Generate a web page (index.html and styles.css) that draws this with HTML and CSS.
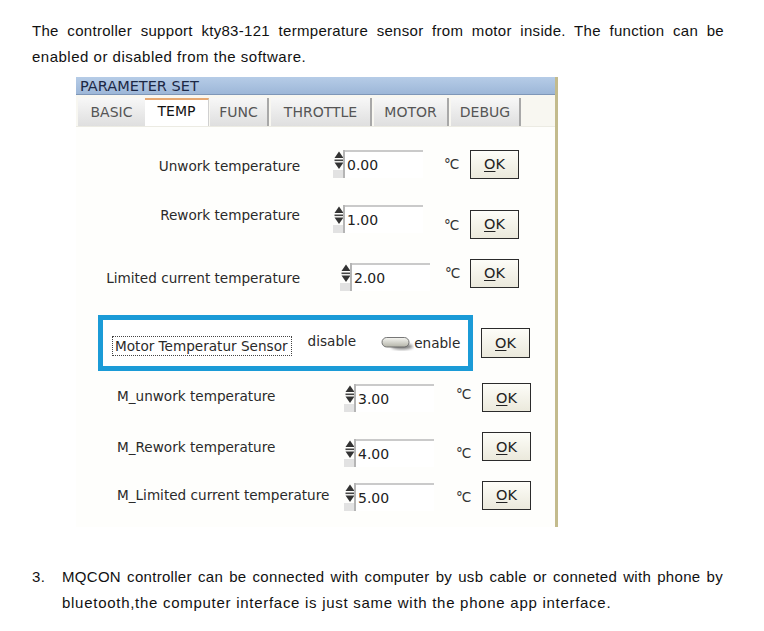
FILE: index.html
```html
<!DOCTYPE html>
<html>
<head>
<meta charset="utf-8">
<title>Parameter set</title>
<link rel="stylesheet" href="styles.css">
</head>
<body>
<div class="intro">
  <div class="jline">The controller support kty83-121 termperature sensor from motor inside. The function can be</div>
  <div class="last-a">enabled or disabled from the software.</div>
</div>

<div class="win">
  <div class="title">PARAMETER SET</div>
  <div class="tabs">
    <div class="tab w-basic">BASIC</div>
    <div class="tab sel w-temp">TEMP</div>
    <div class="tab w-func">FUNC</div>
    <div class="tab w-thr">THROTTLE</div>
    <div class="tab w-mot">MOTOR</div>
    <div class="tab w-dbg">DEBUG</div>
  </div>

  <div class="row r1 ga">
    <div class="lbl s-d2">Unwork temperature</div>
    <div class="spinbox">
      <svg class="spin" width="12" height="28" viewBox="0 0 12 28"><path d="M6 1.5L10.5 8H1.5Z" fill="#333"/><rect x="1.5" y="9.5" width="9" height="1.6" fill="#444"/><path d="M1.5 12.5H10.5L6 19Z" fill="#333"/><rect x="0" y="20" width="11" height="8" fill="#e2e2e2"/><rect x="10" y="0" width="2" height="28" fill="#b5b5b5"/></svg>
      <div class="field">0.00</div>
    </div>
    <div class="unit">°C</div>
    <div class="ok"><span><u>O</u>K</span></div>
  </div>

  <div class="row r2 ga">
    <div class="lbl s-u9">Rework temperature</div>
    <div class="spinbox s-u5">
      <svg class="spin" width="12" height="28" viewBox="0 0 12 28"><path d="M6 1.5L10.5 8H1.5Z" fill="#333"/><rect x="1.5" y="9.5" width="9" height="1.6" fill="#444"/><path d="M1.5 12.5H10.5L6 19Z" fill="#333"/><rect x="0" y="20" width="11" height="8" fill="#e2e2e2"/><rect x="10" y="0" width="2" height="28" fill="#b5b5b5"/></svg>
      <div class="field">1.00</div>
    </div>
    <div class="unit s-d1">°C</div>
    <div class="ok"><span><u>O</u>K</span></div>
  </div>

  <div class="row r3 gb">
    <div class="lbl s-d5">Limited current temperature</div>
    <div class="spinbox s-d4">
      <svg class="spin" width="12" height="28" viewBox="0 0 12 28"><path d="M6 1.5L10.5 8H1.5Z" fill="#333"/><rect x="1.5" y="9.5" width="9" height="1.6" fill="#444"/><path d="M1.5 12.5H10.5L6 19Z" fill="#333"/><rect x="0" y="20" width="11" height="8" fill="#e2e2e2"/><rect x="10" y="0" width="2" height="28" fill="#b5b5b5"/></svg>
      <div class="field">2.00</div>
    </div>
    <div class="unit">°C</div>
    <div class="ok"><span><u>O</u>K</span></div>
  </div>

  <div class="row rb">
    <div class="bluebox">
      <div class="sensor">Motor Temperatur Sensor</div>
      <div class="opt-dis s-u2">disable</div>
      <svg class="toggle" width="34" height="16" viewBox="0 0 34 16">
        <defs>
          <linearGradient id="tg" x1="0" y1="0" x2="0" y2="1"><stop offset="0" stop-color="#f7f7f3"/><stop offset="1" stop-color="#b3b3a8"/></linearGradient>
          <filter id="bl" x="-50%" y="-50%" width="200%" height="200%"><feGaussianBlur stdDeviation="1.4"/></filter>
        </defs>
        <ellipse cx="22" cy="11.5" rx="11" ry="3" fill="#808080" filter="url(#bl)"/>
        <rect x="2" y="2.5" width="27" height="9.5" rx="4.7" fill="url(#tg)" stroke="#666" stroke-width="0.9"/>
      </svg>
      <div class="opt-en">enable</div>
    </div>
    <div class="ok ok-b"><span><u>O</u>K</span></div>
  </div>

  <div class="row r4 gc">
    <div class="lbl s-u2">M_unwork temperature</div>
    <div class="spinbox">
      <svg class="spin" width="12" height="28" viewBox="0 0 12 28"><path d="M6 1.5L10.5 8H1.5Z" fill="#333"/><rect x="1.5" y="9.5" width="9" height="1.6" fill="#444"/><path d="M1.5 12.5H10.5L6 19Z" fill="#333"/><rect x="0" y="20" width="11" height="8" fill="#e2e2e2"/><rect x="10" y="0" width="2" height="28" fill="#b5b5b5"/></svg>
      <div class="field">3.00</div>
    </div>
    <div class="unit s-u4">°C</div>
    <div class="ok"><span><u>O</u>K</span></div>
  </div>

  <div class="row r5 gc">
    <div class="lbl">M_Rework temperature</div>
    <div class="spinbox s-d6">
      <svg class="spin" width="12" height="28" viewBox="0 0 12 28"><path d="M6 1.5L10.5 8H1.5Z" fill="#333"/><rect x="1.5" y="9.5" width="9" height="1.6" fill="#444"/><path d="M1.5 12.5H10.5L6 19Z" fill="#333"/><rect x="0" y="20" width="11" height="8" fill="#e2e2e2"/><rect x="10" y="0" width="2" height="28" fill="#b5b5b5"/></svg>
      <div class="field">4.00</div>
    </div>
    <div class="unit s-d6">°C</div>
    <div class="ok"><span><u>O</u>K</span></div>
  </div>

  <div class="row r6 gc">
    <div class="lbl">M_Limited current temperature</div>
    <div class="spinbox s-d2">
      <svg class="spin" width="12" height="28" viewBox="0 0 12 28"><path d="M6 1.5L10.5 8H1.5Z" fill="#333"/><rect x="1.5" y="9.5" width="9" height="1.6" fill="#444"/><path d="M1.5 12.5H10.5L6 19Z" fill="#333"/><rect x="0" y="20" width="11" height="8" fill="#e2e2e2"/><rect x="10" y="0" width="2" height="28" fill="#b5b5b5"/></svg>
      <div class="field">5.00</div>
    </div>
    <div class="unit s-d2">°C</div>
    <div class="ok"><span><u>O</u>K</span></div>
  </div>
</div>

<div class="note">
  <div class="num">3.</div>
  <div class="note-body">
    <div class="jline">MQCON controller can be connected with computer by usb cable or conneted with phone by</div>
    <div class="last-b">bluetooth,the computer interface is just same with the phone app interface.</div>
  </div>
</div>
</body>
</html>
```

FILE: styles.css
```css
body {
  margin: 0;
  background: #ffffff;
  color: #111111;
  font-family: "Liberation Sans", Arial, sans-serif;
}

.intro {
  padding: 18px 0 0 32px;
  width: 692px;
  font-size: 15px;
  line-height: 26px;
  letter-spacing: 0.3px;
}

.jline {
  text-align: justify;
  text-align-last: justify;
}

.last-a { letter-spacing: 0.5px; }
.last-b { letter-spacing: 0.72px; }

/* dialog window */
.win {
  margin: 7px 0 0 76px;
  width: 479px;
  border-right: 3px solid #c3bb8d;
  background: #fefefc;
  font-family: "DejaVu Sans", Verdana, sans-serif;
  font-size: 13.6px;
  color: #2a2a2a;
  padding-bottom: 17px;
}

.title {
  height: 17px;
  line-height: 18px;
  border-bottom: 1px solid #7f97b8;
  background: linear-gradient(#b6cce7, #9db7d8);
  padding-left: 4px;
  color: #1c2845;
  font-size: 14.5px;
}

.tabs {
  display: flex;
  height: 32px;
  box-sizing: border-box;
  padding: 3px 0 0 2px;
  background: #f8f7f1;
  border-bottom: 1px solid #ecebe3;
}

.tab {
  height: 28px;
  line-height: 28px;
  box-sizing: border-box;
  text-align: center;
  background: linear-gradient(#f7f7f7, #dfdfdf);
  border-right: 2px solid #a8a8a8;
  color: #555;
  font-size: 14px;
}

.tab.sel {
  background: #ffffff;
  border-top: 2px solid #e6a872;
  border-right: 1px solid #d0d0d0;
  line-height: 22px;
  color: #111;
}

.w-basic { width: 67px; border-right: 0; }
.w-temp { width: 64px; }
.w-func { width: 59px; margin-left: 1px; margin-right: 2px; }
.w-thr { width: 101px; margin-right: 2px; }
.w-mot { width: 75px; margin-right: 2px; }
.w-dbg { width: 70px; }

/* rows */
.row {
  display: flex;
  align-items: center;
  height: 30px;
}

.r1 { margin-top: 22px; }
.r2 { margin-top: 30px; }
.r3 { margin-top: 19px; }
.rb { margin-top: 27px; height: 56px; }
.r4 { margin-top: 12px; height: 29px; }
.r5 { margin-top: 20px; height: 29px; }
.r6 { margin-top: 19px; height: 30px; }

.lbl { white-space: nowrap; }

.ga .lbl, .gb .lbl { width: 224px; text-align: right; }
.ga .spinbox { margin-left: 33px; }
.ga .unit { margin-left: 21px; width: 26px; }

.gb .spinbox { margin-left: 40px; }
.gb .unit { margin-left: 15px; width: 25px; }

.gc { padding-left: 41px; }
.gc .lbl { width: 227px; }
.gc .unit { margin-left: 22px; width: 26px; }

.spinbox {
  display: flex;
  height: 28px;
}

.spin { display: block; }

.field {
  width: 78px;
  height: 28px;
  box-sizing: border-box;
  border-top: 2px solid #cacaca;
  background: #ffffff;
  padding-left: 2px;
  line-height: 27px;
  color: #222;
  font-size: 14px;
}

.unit {
  font-size: 13.5px;
  letter-spacing: -1px;
  color: #333;
}

.ok {
  width: 49px;
  height: 29px;
  box-sizing: border-box;
  border: 1px solid #2b2b2b;
  background: linear-gradient(#fdfdf8, #ebe9dc);
  display: flex;
  align-items: center;
  justify-content: center;
  font-size: 14.5px;
  color: #222;
  flex: none;
}

.ok u { text-underline-offset: 2px; }

.ok-b { margin-left: 8px; height: 30px; }

.bluebox {
  margin-left: 22px;
  width: 375px;
  height: 56px;
  box-sizing: border-box;
  border: 5px solid #1b9bd7;
  background: #ffffff;
  display: flex;
  align-items: center;
  padding-left: 9px;
}

.sensor {
  border: 1px dotted #444;
  padding: 0 3px 0 2px;
  height: 18px;
  line-height: 18px;
  margin-top: 5px;
  white-space: nowrap;
}

.opt-dis { margin-left: 16px; }
.toggle { margin-left: 24px; display: block; }
.opt-en { margin-left: 0; }

/* small vertical shifts inside centred rows */
.s-u2 { margin-bottom: 4px; }
.s-u4 { margin-bottom: 8px; }
.s-u5 { margin-bottom: 10px; }
.s-u9 { margin-bottom: 18px; }
.s-d1 { margin-top: 2px; }
.s-d2 { margin-top: 4px; }
.s-d4 { margin-top: 8px; }
.s-d5 { margin-top: 10px; }
.s-d6 { margin-top: 12px; }

/* bottom note */
.note {
  display: flex;
  margin-top: 37px;
  padding-left: 32px;
  font-size: 15px;
  line-height: 26px;
  letter-spacing: 0.3px;
}

.num { width: 30px; flex: none; }
.note-body { width: 661px; }
```
